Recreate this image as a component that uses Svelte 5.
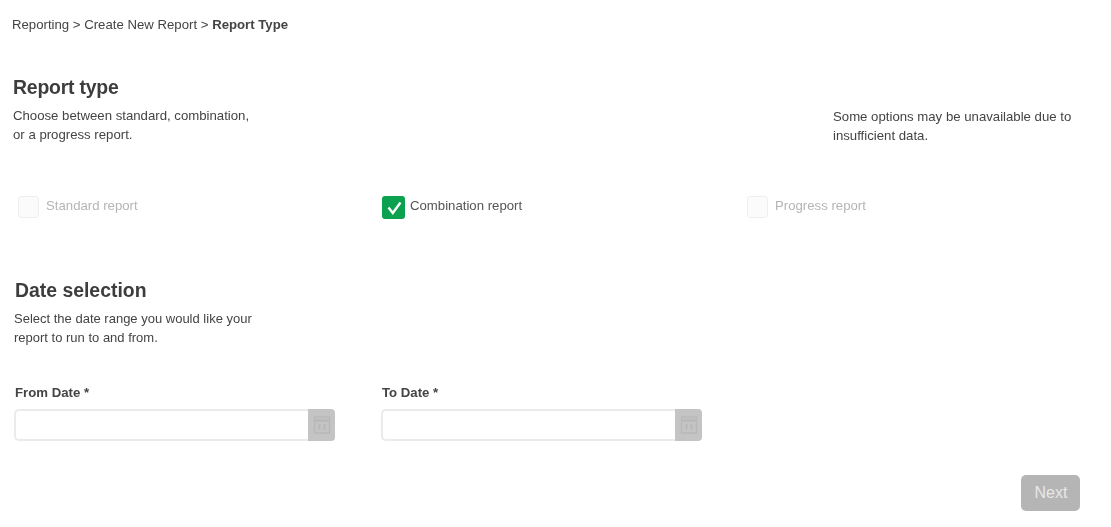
<script lang="ts">
  const options = [
    { id: "standard", label: "Standard report", checked: false },
    { id: "combination", label: "Combination report", checked: true },
    { id: "progress", label: "Progress report", checked: false },
  ];
  const dates = ["From Date *", "To Date *"];
</script>

<div class="page">
  <div class="crumbs">Reporting &gt; Create New Report &gt; <b>Report Type</b></div>

  <section class="type">
    <h2>Report type</h2>
    <div class="intro">
      <p class="left">Choose between standard, combination,<br />or a progress report.</p>
      <p class="right">Some options may be unavailable due to<br />insufficient data.</p>
    </div>
  </section>

  <div class="options">
    {#each options as o}
      <label class="option" class:on={o.checked}>
        <span class="box">
          {#if o.checked}
            <svg width="23" height="23" viewBox="0 0 23 23"><path d="M6.5 11.5 10.8 17 18.5 6.5" fill="none" stroke="#fff" stroke-width="2.4" /></svg>
          {/if}
        </span>
        <span class="text">{o.label}</span>
      </label>
    {/each}
  </div>

  <section class="date">
    <h2>Date selection</h2>
    <p>Select the date range you would like your<br />report to run to and from.</p>
    <div class="fields">
      {#each dates as d}
        <div class="field">
          <span class="label">{d}</span>
          <div class="input">
            <span class="blank"></span>
            <span class="cal">
              <svg width="18" height="20" viewBox="0 0 18 20" fill="none" stroke="#b8b8b8" stroke-width="1.4">
                <rect x="1.5" y="2" width="15" height="16" />
                <path d="M1.5 5.5h15" stroke-width="2.5" />
                <path d="M6.5 9v6M11.5 9v6" stroke-width="2" />
              </svg>
            </span>
          </div>
        </div>
      {/each}
    </div>
  </section>

  <div class="actions">
    <button disabled>Next</button>
  </div>
</div>

<style>
  :global(body) {
    margin: 0;
    background: #fff;
  }

  .page {
    width: 1111px;
    height: 527px;
    overflow: hidden;
    box-sizing: border-box;
    padding-top: 17px;
    font-family: "Liberation Sans", Arial, sans-serif;
    color: #444;
    filter: blur(0.4px);
  }

  .crumbs {
    margin-left: 12px;
    font-size: 13.2px;
    line-height: 16px;
  }

  .type {
    margin: 42px 0 0 13px;
  }

  h2 {
    margin: 0;
    font-size: 19.4px;
    line-height: 24px;
    font-weight: 700;
    color: #3d3d3d;
  }

  .type h2 {
    letter-spacing: -0.2px;
  }

  .intro {
    display: flex;
    justify-content: space-between;
    margin-top: 7px;
  }

  .intro p {
    margin: 0;
    font-size: 13.2px;
    line-height: 19px;
  }

  .intro .right {
    width: 278px;
    margin-top: 1px;
  }

  .options {
    display: grid;
    grid-template-columns: 364px 365px 1fr;
    margin: 51px 0 0 18px;
  }

  .option {
    display: flex;
    align-items: flex-start;
    gap: 7px;
    font-size: 13.2px;
    line-height: 16px;
    color: #b5b5b5;
  }

  .option.on {
    color: #555;
    gap: 5px;
  }

  .box {
    width: 21px;
    height: 22px;
    box-sizing: border-box;
    border: 1px solid #efefef;
    border-radius: 3px;
    background: #fbfbfb;
    display: flex;
  }

  .on .box {
    width: 23px;
    height: 23px;
    border: 0;
    background: #0ba14f;
  }

  .text {
    margin-top: 2px;
  }

  .date {
    margin: 59px 0 0 14px;
  }

  .date h2 {
    margin-left: 1px;
  }

  .date p {
    margin: 7px 0 0;
    font-size: 13px;
    line-height: 19px;
  }

  .fields {
    display: flex;
    gap: 46px;
    margin-top: 38px;
  }

  .field {
    width: 321px;
  }

  .label {
    display: block;
    margin-left: 1px;
    font-size: 13.2px;
    line-height: 16px;
    font-weight: 700;
    color: #444;
  }

  .input {
    display: flex;
    height: 32px;
    margin-top: 8px;
  }

  .blank {
    flex: 1;
    box-sizing: border-box;
    border: 2px solid #ebebeb;
    border-right: 0;
    border-radius: 5px 0 0 5px;
  }

  .cal {
    width: 27px;
    background: #c4c4c4;
    border-radius: 0 4px 4px 0;
    display: flex;
    align-items: center;
    justify-content: center;
  }

  .actions {
    display: flex;
    justify-content: flex-end;
    margin: 34px 31px 0 0;
  }

  button {
    width: 59px;
    height: 36px;
    border: 0;
    border-radius: 5px;
    background: #b5b5b5;
    color: #e8e8e8;
    font-family: inherit;
    font-size: 16px;
    padding: 0 0 0 1px;
  }
</style>
